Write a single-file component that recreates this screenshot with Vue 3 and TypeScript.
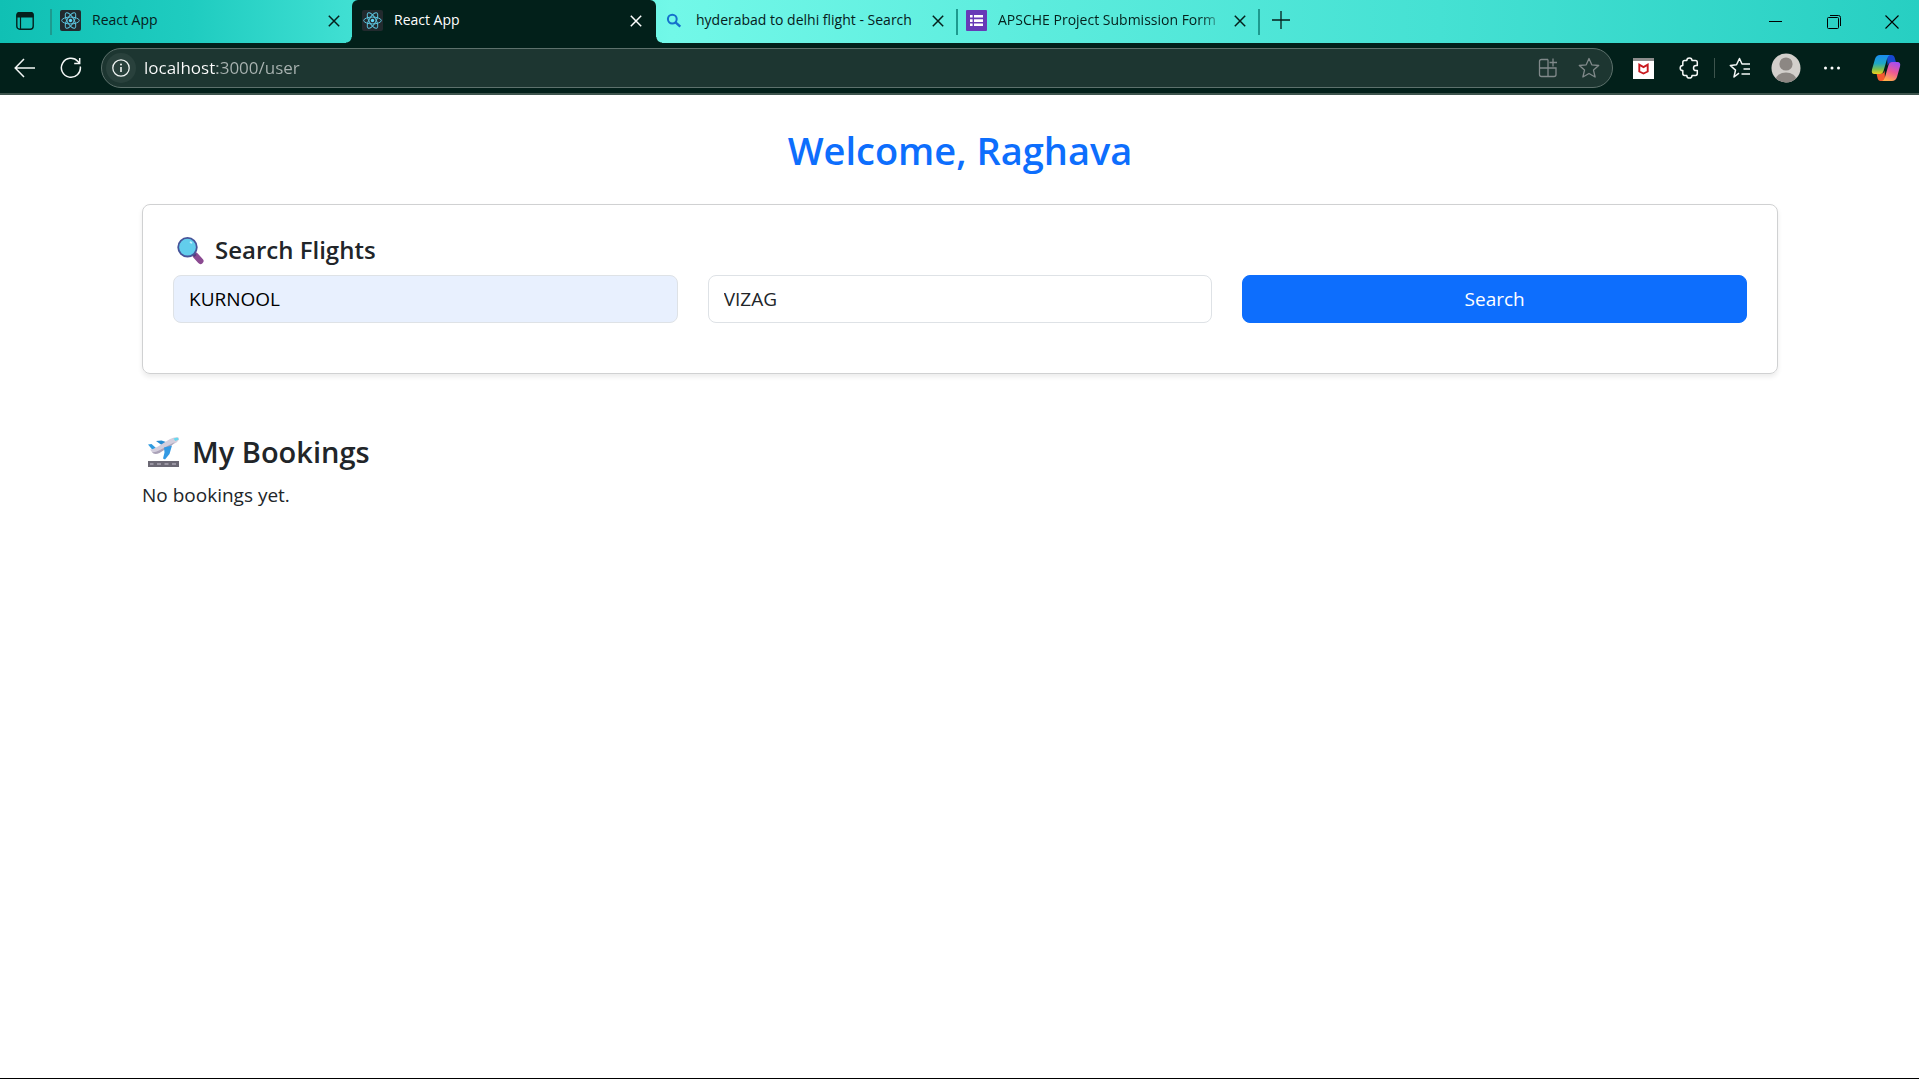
<script setup lang="ts">
import { ref } from 'vue'

interface Tab {
  id: number
  title: string
  icon: 'react' | 'search' | 'form'
  active: boolean
}

const tabs = ref<Tab[]>([
  { id: 1, title: 'React App', icon: 'react', active: false },
  { id: 2, title: 'React App', icon: 'react', active: true },
  { id: 3, title: 'hyderabad to delhi flight - Search', icon: 'search', active: false },
  { id: 4, title: 'APSCHE Project Submission Form', icon: 'form', active: false },
])

const address = ref('localhost:3000/user')
const departure = ref('KURNOOL')
const destination = ref('VIZAG')
</script>

<template>
  <div class="window">
    <header class="browser">
      <div class="strip">
        <button class="icon-btn actions" type="button" aria-label="Tab actions">
          <svg width="18" height="18" viewBox="0 0 18 18" fill="none" stroke="#05201c">
            <rect x="0.8" y="0.8" width="16.4" height="16.4" rx="3" stroke-width="1.4" />
            <path d="M1 1.8Q1 0.5 3 0.5h12q2 0 2 1.3V5H1z" fill="#05201c" />
            <path d="M4.5 5v12" stroke-width="1.2" />
          </svg>
        </button>
        <div v-for="tab in tabs" :key="tab.id" class="tab" :class="[tab.icon, { active: tab.active }]">
          <svg v-if="tab.icon === 'react'" class="favicon" viewBox="0 0 21 21">
            <rect width="21" height="21" rx="2" fill="#222a2e" />
            <g fill="none" stroke="#5cc4de" stroke-width="1">
              <ellipse cx="10.5" cy="10.5" rx="8.8" ry="3.4" />
              <ellipse cx="10.5" cy="10.5" rx="8.8" ry="3.4" transform="rotate(60 10.5 10.5)" />
              <ellipse cx="10.5" cy="10.5" rx="8.8" ry="3.4" transform="rotate(120 10.5 10.5)" />
            </g>
            <circle cx="10.5" cy="10.5" r="1.7" fill="#61dafb" />
          </svg>
          <svg v-else-if="tab.icon === 'search'" class="favicon" viewBox="0 0 21 21" fill="none" stroke="#1470cc">
            <circle cx="8.3" cy="9.1" r="4.4" stroke-width="2" />
            <path d="M11.5 12.3l4.8 4.4" stroke-width="2.4" />
          </svg>
          <svg v-else class="favicon" viewBox="0 0 21 21">
            <rect width="21" height="21" rx="1" fill="#673ab7" />
            <path
              d="M4 5h2.6v2.6H4zM8 5h9v2.6H8zM4 9.3h2.6v2.6H4zM8 9.3h9v2.6H8zM4 13.4h2.6V16H4zM8 13.4h9V16H8z"
              fill="#fff"
            />
          </svg>
          <span class="title">{{ tab.title }}</span>
          <button class="icon-btn" type="button" aria-label="Close tab">
            <svg width="12" height="12" viewBox="0 0 12 12" fill="none" stroke="currentColor" stroke-width="1.5">
              <path d="M0.8 0.8l10.4 10.4M11.2 0.8L0.8 11.2" />
            </svg>
          </button>
        </div>
        <button class="icon-btn new-tab" type="button" aria-label="New tab">
          <svg width="18" height="18" viewBox="0 0 18 18" fill="none" stroke="#05201c" stroke-width="1.3">
            <path d="M9 0v18M0 9h18" />
          </svg>
        </button>
        <div class="controls">
          <button class="icon-btn" type="button" aria-label="Minimize">
            <svg width="14" height="14" viewBox="0 0 14 14" stroke="#000"><path d="M0 6.5h13" /></svg>
          </button>
          <button class="icon-btn" type="button" aria-label="Restore">
            <svg width="14" height="14" viewBox="0 0 14 14" fill="none" stroke="#000">
              <rect x="0.5" y="2.5" width="11" height="11" rx="1" />
              <path d="M3 0.5h8.5q2 0 2 2V11" />
            </svg>
          </button>
          <button class="icon-btn" type="button" aria-label="Close window">
            <svg width="14" height="14" viewBox="0 0 14 14" stroke="#000" stroke-width="1.1">
              <path d="M0.5 0.5l13 13M13.5 0.5l-13 13" />
            </svg>
          </button>
        </div>
      </div>

      <div class="toolbar">
        <button class="icon-btn" type="button" aria-label="Back">
          <svg width="22" height="22" viewBox="0 0 22 22" fill="none" stroke="#f4f7f6" stroke-width="1.5">
            <path d="M21 11H1.5M10 2L1.2 11l8.8 9" />
          </svg>
        </button>
        <button class="icon-btn" type="button" aria-label="Refresh">
          <svg width="22" height="22" viewBox="0 0 22 22" fill="none" stroke="#f4f7f6" stroke-width="1.5">
            <path d="M20.3 9.5A9.5 9.5 0 1 1 18 4.5L19.6 6.3M19.7 1v5.5h-5.5" />
          </svg>
        </button>
        <div class="address">
          <button class="icon-btn info" type="button" aria-label="Site information">
            <svg width="18" height="18" viewBox="0 0 18 18" fill="none" stroke="#f0f4f3" stroke-width="1.3">
              <circle cx="9" cy="9" r="8.2" />
              <path d="M9 8v5" stroke-width="1.6" />
              <circle cx="9" cy="5.4" r="1" fill="#f0f4f3" stroke="none" />
            </svg>
          </button>
          <input v-model="address" class="url" type="text" aria-label="Address" />
          <button class="icon-btn dim" type="button" aria-label="Install app">
            <svg width="20" height="20" viewBox="0 0 20 20" fill="none" stroke="currentColor" stroke-width="1.3">
              <path d="M10 1.500H3.500Q1.500 1.500 1.500 3.500v13q0 2 2 2H16q2 0 2-2V10H1.500M10 1.500v17M15 0.500v8M11.500 4.500H19" />
            </svg>
          </button>
          <button class="icon-btn dim" type="button" aria-label="Add to favorites">
            <svg width="22" height="22" viewBox="0 0 22 22" fill="none" stroke="currentColor" stroke-width="1.3" stroke-linejoin="round">
              <path d="M11 1.5l2.8 6.3 6.9.7-5.2 4.6 1.6 6.9L11 16.5 4.900 20l1.600-6.900L1.300 8.500l6.900-.7z" />
            </svg>
          </button>
        </div>
        <div class="tools">
          <button class="icon-btn" type="button" aria-label="Security extension">
            <svg width="21" height="21" viewBox="0 0 21 21">
              <rect width="21" height="21" fill="#fff" />
              <rect width="21" height="3" fill="#8d8d8d" />
              <path d="M6.300 6.600v6.900l4.200 2 4.200-2V6.600l-4.200 2.500z" fill="none" stroke="#c8191f" stroke-width="1.900" />
            </svg>
          </button>
          <button class="icon-btn" type="button" aria-label="Extensions">
            <svg width="22" height="22" viewBox="0 0 22 22" fill="none" stroke="#f4f7f6" stroke-width="1.500" stroke-linejoin="round">
              <path
                d="M8.800 3.600a2.600 2.600 0 0 1 5.200 0h3.500q1.800 0 1.800 1.800v3h-1.200a2.600 2.600 0 0 0 0 5.200h1.200v3q0 1.900-1.800 1.900H14a2.600 2.600 0 0 1-5.200 0H6.600q-1.800 0-1.800-1.900v-3a2.600 2.600 0 0 1 0-5.200v-3q0-1.800 1.800-1.800z"
              />
            </svg>
          </button>
          <span class="rule"></span>
          <button class="icon-btn" type="button" aria-label="Favorites">
            <svg width="22" height="22" viewBox="0 0 22 22" fill="none" stroke="#f4f7f6" stroke-width="1.500" stroke-linejoin="round">
              <path d="M10 16.200L5 20l1.500-6.900L1.300 8.500l6.200-.7L10.500 1.500l2.500 5.500h8M14.500 12H21M12.500 17H21" />
            </svg>
          </button>
          <button class="icon-btn" type="button" aria-label="Profile">
            <svg width="30" height="30" viewBox="0 0 30 30">
              <defs><clipPath id="avatar"><circle cx="15" cy="15" r="14.500" /></clipPath></defs>
              <circle cx="15" cy="15" r="14.500" fill="#d2cfcb" />
              <g fill="#8c8783" clip-path="url(#avatar)">
                <circle cx="15" cy="11" r="6.600" />
                <ellipse cx="15" cy="27" rx="10.500" ry="7.500" />
              </g>
            </svg>
          </button>
          <button class="icon-btn" type="button" aria-label="Settings and more">
            <svg width="18" height="18" viewBox="0 0 18 18" fill="#fff">
              <circle cx="2.500" cy="9" r="1.500" /><circle cx="9" cy="9" r="1.500" /><circle cx="15.500" cy="9" r="1.500" />
            </svg>
          </button>
          <button class="icon-btn copilot" type="button" aria-label="Copilot">
            <svg width="30" height="28" viewBox="0 0 30 28">
              <defs>
                <linearGradient id="cool" x1="0" y1="0" x2="0" y2="1">
                  <stop offset="0" stop-color="#1a8cf0" /><stop offset="0.450" stop-color="#1fa8c4" />
                  <stop offset="0.750" stop-color="#7cc04e" /><stop offset="1" stop-color="#f2cf1c" />
                </linearGradient>
                <linearGradient id="warm" x1="0.700" y1="0" x2="0.300" y2="1">
                  <stop offset="0" stop-color="#a44df0" /><stop offset="0.500" stop-color="#ee5a94" />
                  <stop offset="1" stop-color="#ffb04a" />
                </linearGradient>
              </defs>
              <path d="M16 1h4.500q2.500 0 3.300 3l1.200 4.500h-5q-2.500 0-3.500 3z" fill="#1747cf" />
              <path d="M14 27H9.500q-2.300 0-3-3L5.500 19.500h5q2.500 0 3.200-3z" fill="#f4592f" />
              <path d="M9 1h10q-2 .5-3 4l-3.500 12q-.8 3-3.500 3H3.500Q0 20 1 15.500L4 5q1.300-4 5-4z" fill="url(#cool)" />
              <path d="M21 27H11q2-.5 3-4l3.500-12q.8-3 3.500-3h5.500Q30 8 29 12.500L26 23q-1.300 4-5 4z" fill="url(#warm)" />
            </svg>
          </button>
        </div>
      </div>
    </header>

    <main class="page">
      <h1>Welcome, Raghava</h1>
      <section class="card">
        <h2>
          <svg class="lens" viewBox="0 0 30 30">
            <path d="M20.500 20.500l5 5.500" stroke="#8b4a91" stroke-width="6" stroke-linecap="round" />
            <path d="M17.500 18l3 3" stroke="#533f78" stroke-width="3" />
            <circle cx="12.500" cy="12.200" r="9.300" fill="#62cdec" stroke="#46549a" stroke-width="1.800" />
            <ellipse cx="16" cy="7.500" rx="1.500" ry="1" fill="#c4f1ff" transform="rotate(35 16 7.500)" />
          </svg>
          Search Flights
        </h2>
        <form class="row" @submit.prevent>
          <input v-model="departure" class="field filled" type="text" aria-label="Departure city" />
          <input v-model="destination" class="field" type="text" aria-label="Destination city" />
          <button class="submit" type="submit">Search</button>
        </form>
      </section>
      <section class="bookings">
        <h2>
          <svg class="plane" viewBox="0 0 36 36">
            <rect x="2" y="27" width="31" height="6" fill="#6b6874" />
            <path d="M4 30h3.500M11 30h4M18.500 30h4M26 30h4" stroke="#aaa5b2" stroke-width="1.500" />
            <path d="M10 7l5.500-.5L23 9l-6 3z" fill="#278bd2" />
            <path d="M2 10.500l3.500-.5L10 14l-3 2.500z" fill="#2f9be0" />
            <path d="M4 15.500q4-.5 8-3L24 5q5-2.500 8.500-1.500 1.500 1.800-2 5L13 18q-4 2.200-6.500.7z" fill="#d3cedd" />
            <path d="M6 18.200q3 .6 7-1.700l16-8.500-3 3L13.500 19q-5 2.300-7.500-.8z" fill="#aaa2b8" />
            <path d="M27.500 4.500l4-1 1.300 2-3.500 1.500z" fill="#65d9ef" />
            <path d="M18 13.500l8-2-2.500 8.500-4.500 5.500-2-1 1.500-6z" fill="#3399e3" />
          </svg>
          My Bookings
        </h2>
        <p>No bookings yet.</p>
      </section>
    </main>
  </div>
</template>

<style>
body {
  margin: 0;
}
</style>

<style scoped>
* {
  box-sizing: border-box;
}

.window {
  display: flex;
  flex-direction: column;
  min-height: 100vh;
  border-bottom: 1px solid #000;
  background: #fff;
  color: #212529;
  font-family: 'Open Sans', 'Noto Sans', sans-serif;
}

svg {
  display: block;
  flex: none;
}

.icon-btn {
  display: flex;
  align-items: center;
  justify-content: center;
  flex: none;
  padding: 0;
  border: 0;
  background: none;
  color: inherit;
}

.browser {
  border-bottom: 2px solid #3d544d;
  background: #02201a;
}

.strip {
  display: flex;
  height: 43px;
  background: linear-gradient(90deg, #10c0b4 0%, #1fccc0 10%, #3fdfd2 18%, #72f8e8 35%, #5cecdd 54%, #45e1d3 75%, #27cfc2 100%);
}

.actions {
  width: 50px;
  padding-bottom: 2px;
}

.tab {
  position: relative;
  display: flex;
  flex: 0 1 302px;
  align-items: center;
  min-width: 0;
  padding: 0 12px 2px 10px;
  color: #05201c;
}

.tab:not(.active)::before,
.tab:nth-last-child(3)::after {
  content: '';
  position: absolute;
  top: 9px;
  left: 0;
  width: 2px;
  height: 26px;
  background: #1d9a8f;
}

.tab:nth-last-child(3)::after {
  right: -2px;
  left: auto;
}

.tab.active + .tab::before {
  display: none;
}

.tab.active {
  flex-basis: 304px;
  margin-right: -2px;
  padding-right: 14px;
  border-radius: 6px 6px 0 0;
  background: #02201a;
  color: #fff;
}

.tab.active::before,
.tab.active::after {
  content: '';
  position: absolute;
  bottom: 0;
  width: 6px;
  height: 6px;
}

.tab.active::before {
  left: -6px;
  background: radial-gradient(circle at 0 0, transparent 5px, #02201a 6px);
}

.tab.active::after {
  right: -6px;
  background: radial-gradient(circle at 100% 0, transparent 5px, #02201a 6px);
}

.favicon {
  width: 21px;
  height: 21px;
}

.title {
  flex: 1;
  overflow: hidden;
  margin: 0 9px 2px 11px;
  font-size: 14px;
  line-height: 20px;
  white-space: nowrap;
}

.form .title {
  mask-image: linear-gradient(90deg, #000 calc(100% - 24px), transparent);
}

.new-tab {
  width: 46px;
  padding-bottom: 3px;
}

.controls {
  display: flex;
  margin-left: auto;
}

.controls .icon-btn {
  width: 58px;
  padding-left: 3px;
}

.toolbar {
  display: flex;
  align-items: center;
  gap: 24px;
  height: 50px;
  padding: 0 18px 0 14px;
}

.address {
  display: flex;
  flex: 1;
  align-items: center;
  gap: 20px;
  height: 40px;
  margin-left: -5px;
  padding: 0 12px 0 4px;
  border: 1px solid #5d716c;
  border-radius: 20px;
  background: #1d3631;
}

.info {
  width: 30px;
  height: 30px;
  border-radius: 15px;
  background: #29413c;
}

.url {
  flex: 1;
  min-width: 0;
  margin-left: -12px;
  padding: 0;
  border: 0;
  outline: 0;
  background: linear-gradient(90deg, #fff 73px, #aab4b2 73px);
  background-clip: text;
  color: #aab4b2;
  font: 17px/30px 'Open Sans', 'Noto Sans', sans-serif;
  -webkit-text-fill-color: transparent;
}

.dim {
  color: #80898a;
}

.tools {
  display: flex;
  align-items: center;
  gap: 20px;
  margin-left: -7px;
}

.tools .icon-btn {
  width: 26px;
}

.rule {
  width: 1px;
  height: 20px;
  margin: 0 -8px;
  background: #3d544d;
}

.tools .copilot {
  width: 30px;
  margin-left: 6px;
}

.page {
  width: 100%;
  max-width: 1667px;
  margin: 0 auto;
  padding: 31px 15px 30px 16px;
}

h1,
h2,
p {
  margin: 0;
}

h1 {
  margin-bottom: 30px;
  color: #0d6efd;
  font-size: 38px;
  font-weight: 600;
  line-height: 48px;
  text-align: center;
}

.card {
  padding: 30px 30px 50px;
  border: 1px solid #d0d1d2;
  border-radius: 8px;
  box-shadow: 0 3px 5px rgba(0, 0, 0, 0.08);
}

h2 {
  display: flex;
  align-items: center;
  margin-bottom: 10px;
  font-weight: 600;
}

.card h2 {
  gap: 10px;
  padding-left: 2px;
  font-size: 24px;
  line-height: 30px;
}

.lens {
  width: 30px;
  height: 30px;
}

.row {
  display: grid;
  grid-template-columns: repeat(3, 1fr);
  gap: 30px;
}

.field,
.submit {
  width: 100%;
  height: 48px;
  padding: 0 15px;
  border: 1px solid #dee2e6;
  border-radius: 8px;
  background: #fff;
  color: #212529;
  font: 19px/30px 'Open Sans', 'Noto Sans', sans-serif;
}

.filled {
  background: #e8f0fe;
  color: #000;
}

.submit {
  border-color: #0d6efd;
  background: #0d6efd;
  color: #fff;
}

.bookings {
  margin-top: 60px;
}

.bookings h2 {
  gap: 10px;
  padding-left: 4px;
  font-size: 29px;
  line-height: 36px;
}

.plane {
  width: 36px;
  height: 36px;
}

p {
  font-size: 19px;
  line-height: 30px;
}
</style>
